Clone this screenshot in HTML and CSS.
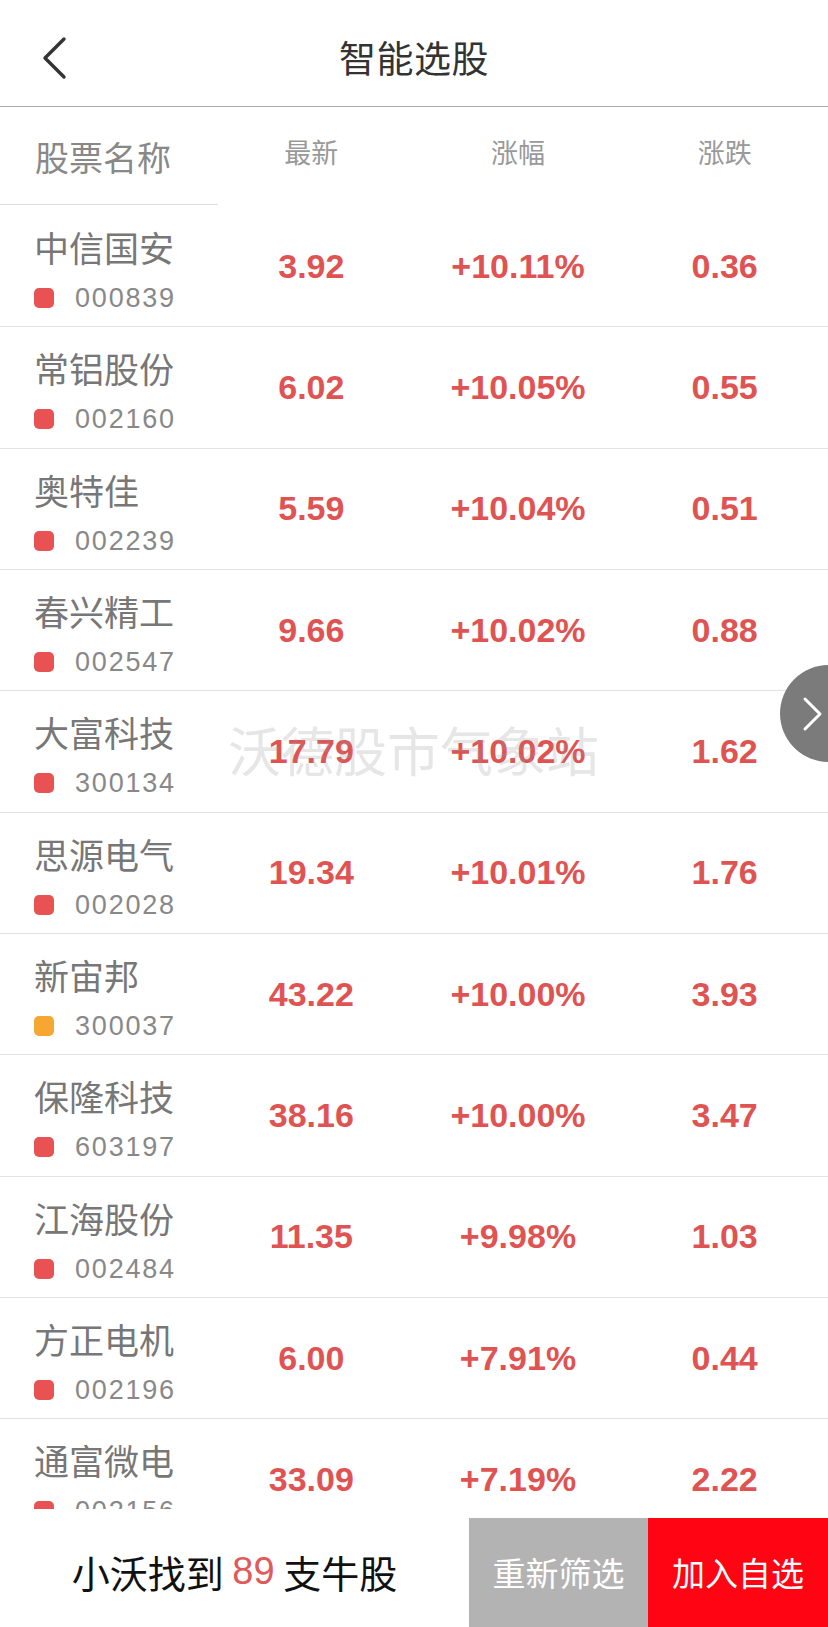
FILE: index.html
```html
<!DOCTYPE html>
<html lang="zh-CN">
<head>
  <meta charset="UTF-8" />
  <meta name="viewport" content="width=device-width, initial-scale=1.0" />
  <title>智能选股</title>
  <link rel="stylesheet" href="styles.css">
</head>
<body>
  <div class="page">
    <div class="nav">
      <svg class="back" width="26" height="44" viewBox="0 0 26 44">
        <polyline points="22,3 3,22 22,41" fill="none" stroke="#333" stroke-width="3.4" stroke-linecap="round" stroke-linejoin="round" />
      </svg>
      <div class="title">智能选股</div>
    </div>

    <div class="list-head">
      <div class="head-name"><span>股票名称</span></div>
      <div class="head-col">最新</div>
      <div class="head-col">涨幅</div>
      <div class="head-col">涨跌</div>
    </div>

    <div class="list" id="list">
      <div class="watermark">沃德股市气象站</div>
    </div>

    <div class="bar">
      <div class="found">小沃找到 <span class="count">89</span> 支牛股</div>
      <button class="btn btn-reset">重新筛选</button>
      <button class="btn btn-add">加入自选</button>
    </div>

    <div class="side-tab">
      <svg width="22" height="36" viewBox="0 0 22 36">
        <polyline points="3,3 18,18 3,33" fill="none" stroke="#fff" stroke-width="3" stroke-linecap="round" stroke-linejoin="round" />
      </svg>
    </div>
  </div>

  <script>
    const stocks = [
      ['中信国安', '000839', 'red', '3.92', '+10.11%', '0.36'],
      ['常铝股份', '002160', 'red', '6.02', '+10.05%', '0.55'],
      ['奥特佳', '002239', 'red', '5.59', '+10.04%', '0.51'],
      ['春兴精工', '002547', 'red', '9.66', '+10.02%', '0.88'],
      ['大富科技', '300134', 'red', '17.79', '+10.02%', '1.62'],
      ['思源电气', '002028', 'red', '19.34', '+10.01%', '1.76'],
      ['新宙邦', '300037', 'orange', '43.22', '+10.00%', '3.93'],
      ['保隆科技', '603197', 'red', '38.16', '+10.00%', '3.47'],
      ['江海股份', '002484', 'red', '11.35', '+9.98%', '1.03'],
      ['方正电机', '002196', 'red', '6.00', '+7.91%', '0.44'],
      ['通富微电', '002156', 'red', '33.09', '+7.19%', '2.22']
    ];

    const list = document.getElementById('list');

    stocks.forEach(s => {
      const row = document.createElement('div');
      row.className = 'row';
      row.innerHTML = `
        <div class="cell-name">
          <div class="name">${s[0]}</div>
          <div class="code"><i class="mark ${s[2]}"></i>${s[1]}</div>
        </div>
        <div class="num">${s[3]}</div>
        <div class="num">${s[4]}</div>
        <div class="num">${s[5]}</div>`;
      list.appendChild(row);
    });
  </script>
</body>
</html>
```

FILE: styles.css
```css
body {
  margin: 0;
  background: #fff;
  font-family: 'Liberation Sans', 'Noto Sans CJK SC', sans-serif;
  overflow: hidden;
}
.page {
  position: relative;
  height: 100vh;
  display: flex;
  flex-direction: column;
  overflow: hidden;
}
.nav {
  position: relative;
  height: 107px;
  flex-shrink: 0;
  display: flex;
  align-items: center;
  justify-content: center;
  padding-top: 8px;
  box-sizing: border-box;
  border-bottom: 1px solid #a9a9a9;
}
.back {
  position: absolute;
  left: 42px;
  top: 36px;
}
.title {
  font-family: 'Noto Sans CJK SC', sans-serif;
  font-size: 37px;
  color: #333;
  letter-spacing: 0.5px;
}
.list-head,
.row {
  display: grid;
  grid-template-columns: 208px repeat(3, 1fr);
}
.list-head {
  height: 99px;
  flex-shrink: 0;
}
.head-name span {
  display: block;
  width: 218px;
  height: 98px;
  box-sizing: border-box;
  padding: 30px 0 0 35px;
  border-bottom: 1px solid #dedede;
  font-family: 'Noto Sans CJK SC', sans-serif;
  font-size: 34px;
  line-height: 40px;
  color: #888;
}
.head-col {
  padding-top: 28px;
  text-align: center;
  font-family: 'Noto Sans CJK SC', sans-serif;
  font-size: 27px;
  line-height: 34px;
  color: #999;
}
.list {
  position: relative;
  flex: 1;
  overflow: hidden;
  margin-bottom: 9px;
}
.row {
  position: relative;
  z-index: 1;
  height: 121.33px;
  box-sizing: border-box;
  border-bottom: 1px solid #e3e3e3;
}
.cell-name {
  padding: 20px 0 0 34px;
}
.name {
  font-family: 'Noto Sans CJK SC', sans-serif;
  font-size: 35px;
  line-height: 42px;
  color: #777;
}
.code {
  display: flex;
  align-items: center;
  margin-top: 13px;
  font-size: 27px;
  line-height: 34px;
  letter-spacing: 1.8px;
  color: #888;
}
.mark {
  width: 20px;
  height: 20px;
  border-radius: 5px;
  margin-right: 21px;
}
.mark.red {
  background: #e85252;
}
.mark.orange {
  background: #f6a732;
}
.num {
  display: flex;
  align-items: center;
  justify-content: center;
  font-size: 34px;
  font-weight: bold;
  color: #e05353;
}
.watermark {
  position: absolute;
  z-index: 2;
  left: 228px;
  top: 513px;
  font-family: 'Noto Sans CJK SC', sans-serif;
  font-size: 53px;
  line-height: 60px;
  color: rgba(150, 150, 150, 0.24);
  pointer-events: none;
  white-space: nowrap;
}
.bar {
  height: 109px;
  flex-shrink: 0;
  display: flex;
  font-family: 'Noto Sans CJK SC', sans-serif;
}
.found {
  flex: 1;
  display: flex;
  align-items: center;
  justify-content: center;
  padding-bottom: 2px;
  font-size: 38px;
  color: #111;
  white-space: pre;
}
.count {
  font-family: 'Liberation Sans', sans-serif;
  color: #e05a5a;
}
.btn {
  width: 179px;
  border: none;
  padding: 0 0 2px;
  font-family: 'Noto Sans CJK SC', sans-serif;
  font-size: 33px;
  color: #fff;
  cursor: pointer;
}
.btn-reset {
  background-color: #b3b3b3;
}
.btn-add {
  width: 180px;
  background-color: #ff0514;
}
.side-tab {
  position: absolute;
  z-index: 3;
  top: 665px;
  right: -49px;
  width: 97px;
  height: 97px;
  border-radius: 50%;
  background: #7b7b7b;
  display: flex;
  align-items: center;
  padding-left: 22px;
  box-sizing: border-box;
}
```
